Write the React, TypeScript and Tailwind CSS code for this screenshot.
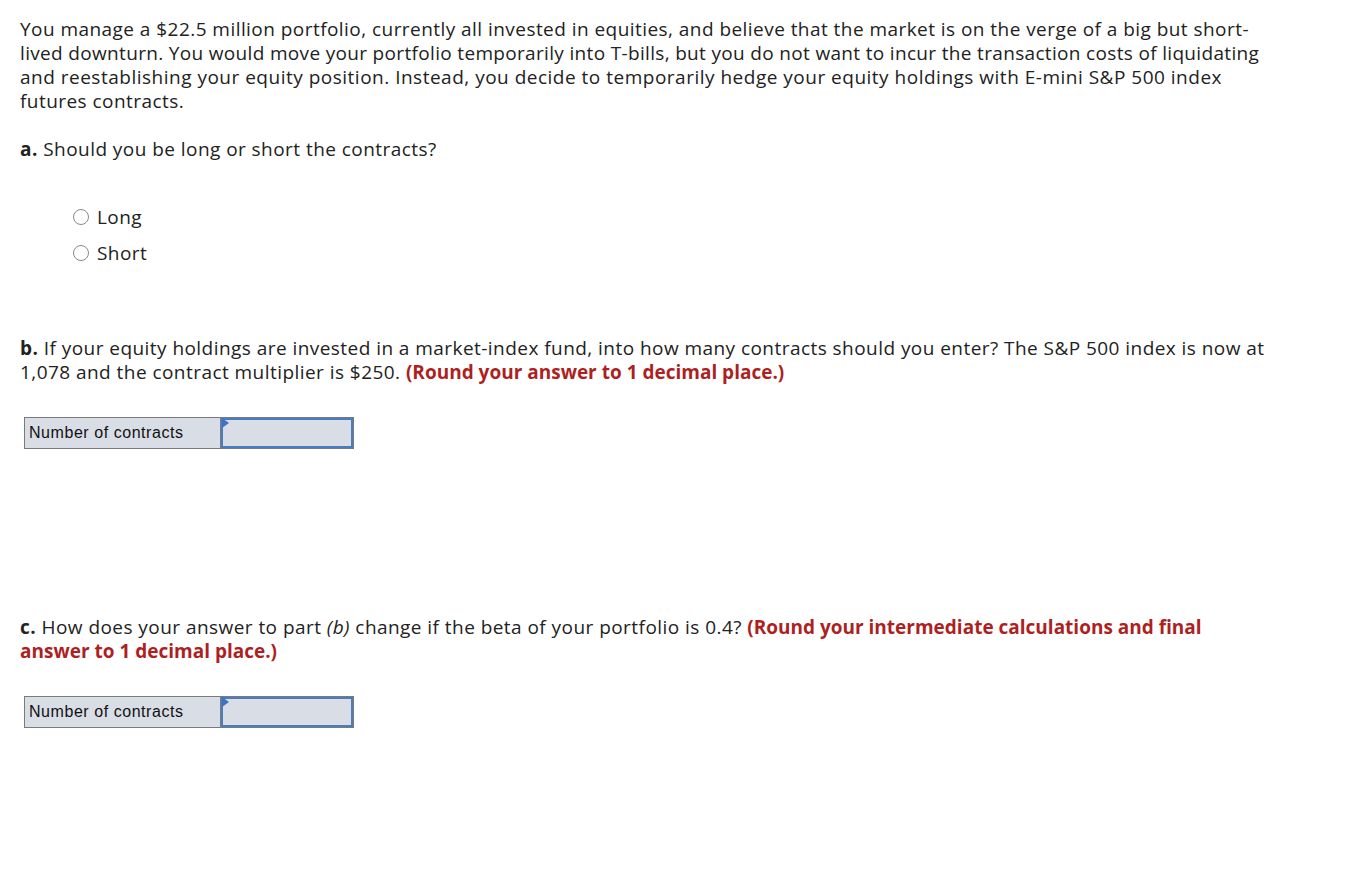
import React from "react"

const Radio = ({ label }: { label: string }) => (
  <label className="flex items-center h-[36px]">
    <span className="w-[16px] h-[16px] rounded-full border border-[#8a8a8a] bg-white mr-[8px]" />
    <span>{label}</span>
  </label>
)

const Hint = ({ children }: { children: React.ReactNode }) => (
  <b className="text-[#ae1f1f] tracking-normal">{children}</b>
)

const AnswerRow = () => (
  <table className="border-collapse border border-[#7a7a7a]" style={{ fontFamily: "'Liberation Sans', Arial, sans-serif" }}>
    <tbody>
      <tr>
        <td className="w-[196px] h-[30px] bg-[#d9dde6] border border-[#7a7a7a] pl-[4px] text-[16px] text-[#111] leading-none tracking-[0.55px]">
          Number of contracts
        </td>
        <td className="w-[133px] h-[30px] p-0 border border-[#7a7a7a] bg-[#d9dde6]">
          <div className="relative w-full h-[30px] border-2 border-[#4a7cc4]">
            <span className="absolute -top-[2px] -left-[1px] w-0 h-0 border-t-[5px] border-b-[5px] border-l-[7px] border-t-transparent border-b-transparent border-l-[#3d72c4]" />
          </div>
        </td>
      </tr>
    </tbody>
  </table>
)

export default function App() {
  return (
    <div
      className="bg-white min-h-[878px] px-[20px] pt-[17px] text-[19px] leading-[24px] tracking-[0.45px] text-[#222]"
      style={{ fontFamily: "'Open Sans', sans-serif" }}
    >
      <p>
        You manage a $22.5 million portfolio, currently all invested in equities, and believe that the market is on the verge of a big but short-
        <br />
        <span className="tracking-[0.33px]">
          lived downturn. You would move your portfolio temporarily into T-bills, but you do not want to incur the transaction costs of liquidating
        </span>
        <br />
        <span className="tracking-[0.5px]">
          and reestablishing your equity position. Instead, you decide to temporarily hedge your equity holdings with E-mini S&amp;P 500 index
        </span>
        <br />
        futures contracts.
      </p>

      <p className="mt-[24px]">
        <b>a.</b> Should you be long or short the contracts?
      </p>

      <div className="mt-[38px] pl-[53px]">
        <Radio label="Long" />
        <Radio label="Short" />
      </div>

      <p className="mt-[65px]">
        <b>b.</b> If your equity holdings are invested in a market-index fund, into how many contracts should you enter? The S&amp;P 500 index is now at
        <br />
        1,078 and the contract multiplier is $250. <Hint>(Round your answer to 1 decimal place.)</Hint>
      </p>

      <div className="mt-[33px] pl-[4px]">
        <AnswerRow />
      </div>

      <p className="mt-[166px]">
        <b>c.</b> How does your answer to part <i>(b)</i> change if the beta of your portfolio is 0.4?{" "}
        <Hint>(Round your intermediate calculations and final</Hint>
        <br />
        <Hint>answer to 1 decimal place.)</Hint>
      </p>

      <div className="mt-[33px] pl-[4px]">
        <AnswerRow />
      </div>
    </div>
  )
}
